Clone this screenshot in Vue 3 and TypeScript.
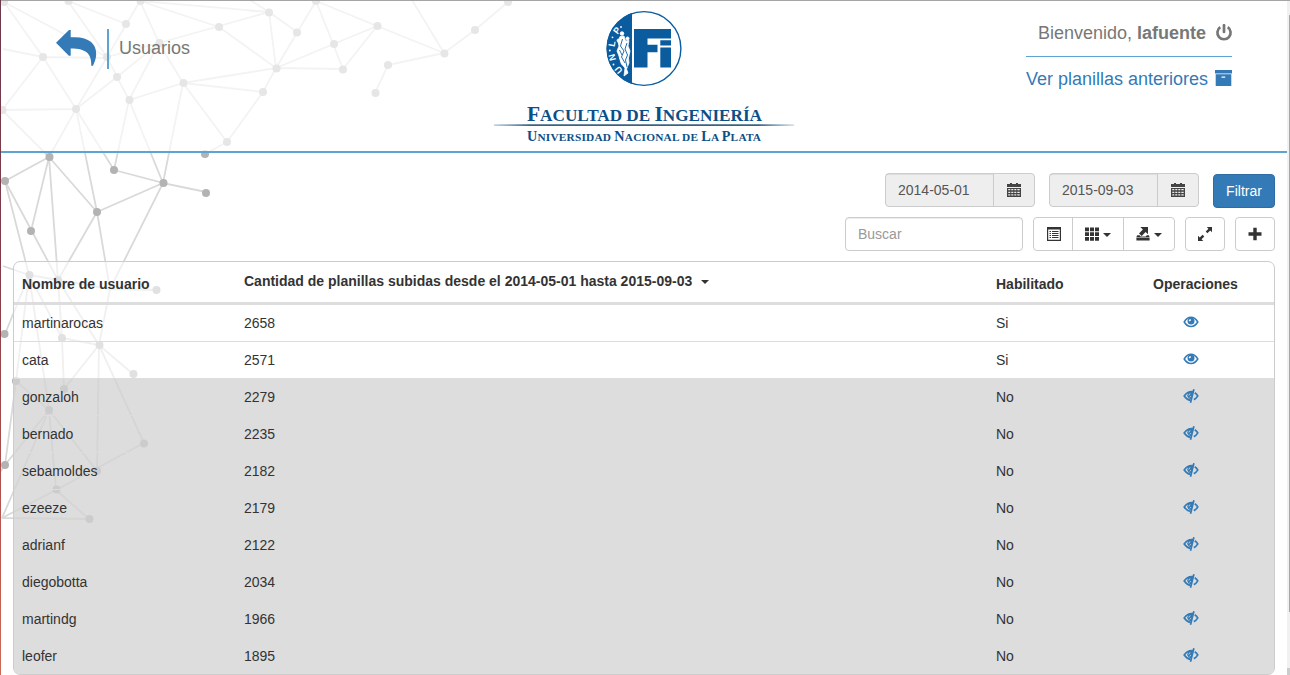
<script setup lang="ts">
interface UserRow {
  name: string
  count: number
  enabled: boolean
}

const from = '2014-05-01'
const to = '2015-09-03'

const users: UserRow[] = [
  { name: 'martinarocas', count: 2658, enabled: true },
  { name: 'cata', count: 2571, enabled: true },
  { name: 'gonzaloh', count: 2279, enabled: false },
  { name: 'bernado', count: 2235, enabled: false },
  { name: 'sebamoldes', count: 2182, enabled: false },
  { name: 'ezeeze', count: 2179, enabled: false },
  { name: 'adrianf', count: 2122, enabled: false },
  { name: 'diegobotta', count: 2034, enabled: false },
  { name: 'martindg', count: 1966, enabled: false },
  { name: 'leofer', count: 1895, enabled: false },
]

// Vertices of the decorative mesh behind the page
const nodes: [number, number][] = [
  [4, 2], [68.500, 1], [140.500, 1], [126, 24], [219, 27], [159.500, 43], [43, 57], [107, 57], [117, 77],
  [129.5, 100], [183.500, 83], [76, 109], [2.500, 110], [227, 142], [269, 12.500], [297, 32.500], [316, 1],
  [377.500, 26], [334, 44], [276.500, 68.500], [343, 69.500], [263, 92], [444.500, 53.500], [475, 30], [508, 2],
  [388, 65], [375.500, 93], [49.500, 157], [5, 181], [31, 231], [114, 170], [163.500, 183], [97, 212],
  [205, 154], [206, 193], [29.500, 275], [58, 280], [156.500, 290], [4.500, 334], [62, 338], [99.500, 345],
  [133.500, 374], [16, 381], [64, 389], [49, 410], [144, 443.500], [5, 465], [97, 471], [56.500, 489.500],
  [89.500, 519],
]

const mesh = [
  'M43 57L4 2L107 57L68 1L126 24M107 57L140 1L159 43M269 12L140 1L219 27M159 43L269 12M219 27L276 68',
  'M3 49L43 57L107 58M76 109L43 57L2 110L76 109L107 57L117 77L129 100M107 57L159 43M76 109L117 77L159 43L129 100L183 83L159 43',
  'M276 68L183 83L263 92L227 142L183 83M227 142L205 154M2 110L49 157L76 109L97 212M76 109L114 170L129 100L163 183L183 83',
  'M250 0L269 12L297 32M250 11L269 12M269 12L276 68L316 1L377 26L276 68L343 69L377 26L444 53L412 0M316 1L343 69M444 53L475 30L508 2M444 53L388 65L375 93M276 68L263 92',
  'M5 181L49 157L31 231M97 212L49 157L58 280L5 181L29 275M114 170L163 183L97 212M206 192L163 183L110 289L97 212L58 280',
  'M3 266L29 275L58 280L110 289L156 290M5 334L29 275L16 381M49 410L29 275L62 338M58 280L62 338L64 389M58 280L99 345L110 289M62 338L99 345L133 374',
  'M64 389L99 345L144 443M99 345L97 471M5 465L16 381L49 410L5 465L0 472M2 518L49 410L56 490M49 410L97 471M144 443L56 490L2 518L89 519L56 490',
].join('')
</script>

<template>
  <div class="page">
    <svg class="mesh" viewBox="0 0 520 675" width="520" height="675">
      <path :d="mesh" fill="none" stroke="#d9d9d9" stroke-width="1.8" />
      <circle v-for="([x, y], i) in nodes" :key="i" :cx="x" :cy="y" r="4" fill="#b3b3b3" />
    </svg>

    <header class="header">
      <div class="crumb">
        <svg class="back" viewBox="0 0 42 38" width="42" height="38">
          <path d="M0 13.800L13 1H14.700V8.300H19C33 8.300 40.200 15 40.200 25C40.200 29.500 38.500 33 37 36.800H35.300C35.600 25.500 31 19.600 14.700 19.600V26.700H12.900Z" fill="#337ab7" />
        </svg>
        <h1 class="title">Usuarios</h1>
      </div>

      <svg class="brand" viewBox="490 8 308 138" width="308" height="138">
        <defs>
          <linearGradient id="rule" x1="0" x2="1">
            <stop offset="0" stop-color="#0b4f88" stop-opacity=".3" />
            <stop offset=".12" stop-color="#0c3c60" />
            <stop offset=".88" stop-color="#0c3c60" />
            <stop offset="1" stop-color="#0b4f88" stop-opacity=".2" />
          </linearGradient>
          <clipPath id="half"><rect x="600" y="8" width="32" height="82" /></clipPath>
        </defs>
        <circle cx="644" cy="48.500" r="36.900" fill="#fff" stroke="#0a5c9f" stroke-width="1.400" />
        <circle cx="644" cy="48.500" r="37.400" fill="#0a5c9f" clip-path="url(#half)" />
        <path d="M634 29H671V38.500H647.500V44.800H657.500V52.300H647.500V67.500H634ZM660.300 40.300H671V45.600H660.300ZM660.300 47.500H671V67.500H660.300Z" fill="#0a5c9f" />
        <g fill="#fff" stroke="#fff" stroke-width=".8" stroke-linejoin="round">
          <circle cx="622" cy="33.500" r="1.800" />
          <circle cx="627.500" cy="38.500" r="1.600" />
          <circle cx="618.500" cy="40.500" r="1.500" />
          <path d="M620 36.500L624 36L625.500 41L629 40.500L628 46L630 51L628.500 58L629 63L626.500 69L628 73L624 76L625 68L620.500 63L619 56L617 51L619 46L618 42Z" />
        </g>
        <path d="M622.500 39L620.500 46L624 51L621.500 57L625 63M627 43L625 49L627.500 55L625.500 60L627 67M619.500 50L622 55M618 57L621 66" fill="none" stroke="#0a5c9f" stroke-width=".9" />
        <g class="arc">
          <text transform="translate(618.500 70) rotate(-130)" y="3.200">U</text>
          <circle cx="613.500" cy="64.500" r=".9" />
          <text transform="translate(612 57.500) rotate(-105)" y="3.200">N</text>
          <circle cx="609.800" cy="50.500" r=".9" />
          <text transform="translate(611.800 43.800) rotate(-80)" y="3.200">L</text>
          <circle cx="612.500" cy="37.300" r=".9" />
          <text transform="translate(616.800 30.500) rotate(-52)" y="3.200">P</text>
          <circle cx="621" cy="27" r=".9" />
        </g>
        <g class="wordmark">
          <text x="527" y="120.600" textLength="235" lengthAdjust="spacing" font-size="17.200"><tspan font-size="21.500">F</tspan>ACULTAD DE <tspan font-size="21.500">I</tspan>NGENIERÍA</text>
          <text x="527" y="140.800" textLength="234" lengthAdjust="spacing" font-size="11.300"><tspan font-size="14.200">U</tspan>NIVERSIDAD <tspan font-size="14.200">N</tspan>ACIONAL DE <tspan font-size="14.200">L</tspan>A <tspan font-size="14.200">P</tspan>LATA</text>
        </g>
        <rect x="494" y="124.400" width="300" height="1.400" fill="url(#rule)" />
      </svg>

      <div class="account">
        <div class="welcome">
          <span>Bienvenido, <b>lafuente</b></span>
          <svg viewBox="0 0 18 18" width="18" height="18" fill="none" stroke="#777" stroke-width="2.700">
            <path d="M5.300 3.200A6.600 6.600 0 1 0 12.700 3.200" />
            <path d="M9 1.200V8" stroke-linecap="round" />
          </svg>
        </div>
        <a class="archive">
          <span>Ver planillas anteriores</span>
          <svg viewBox="0 0 17 16" width="17" height="16" fill="#337ab7">
            <path d="M0 0H17V3.500H0Z" />
            <path fill-rule="evenodd" d="M.7 4.200H16.300V16H.7ZM6.500 6.500V7.800H10.200V6.500Z" />
          </svg>
        </a>
      </div>
    </header>

    <main class="content">
      <div class="filters">
        <div v-for="date in [from, to]" :key="date" class="date">
          <span class="date-value">{{ date }}</span>
          <span class="date-addon">
            <svg viewBox="0 0 14 14" width="14" height="14" fill="#444">
              <path d="M0 1H3V0H5V1H9V0H11V1H14V4H0Z" />
              <path fill-rule="evenodd" d="M0 5H14V14H0ZM1.300 6V7.300H3.300V6ZM4.300 6V7.300H6.300V6ZM7.300 6V7.300H9.300V6ZM10.300 6V7.300H12.700V6ZM1.300 8.700V10H3.300V8.700ZM4.300 8.700V10H6.300V8.700ZM7.300 8.700V10H9.300V8.700ZM10.300 8.700V10H12.700V8.700ZM1.300 11.300V12.600H3.300V11.300ZM4.300 11.300V12.600H6.300V11.300ZM7.300 11.300V12.600H9.300V11.300ZM10.300 11.300V12.600H12.700V11.300Z" />
            </svg>
          </span>
        </div>
        <button class="primary">Filtrar</button>
      </div>

      <div class="tools">
        <input class="search" type="text" placeholder="Buscar" />
        <div class="group">
          <button class="tool list">
            <svg viewBox="0 0 14 14" width="14" height="14">
              <path fill="#333" fill-rule="evenodd" d="M0 0H14V14H0ZM1.200 2.500V12.800H12.800V2.500Z" />
              <path stroke="#333" d="M2.500 4.500H4M5 4.500H11.500M2.500 6.500H4M5 6.500H11.500M2.500 8.500H4M5 8.500H11.500M2.500 10.500H4M5 10.500H11.500" />
            </svg>
          </button>
          <button class="tool columns">
            <svg viewBox="0 0 14 14" width="14" height="14" fill="#333">
              <path d="M0 .5H4V4.300H0ZM5 .5H9V4.300H5ZM10 .5H14V4.300H10ZM0 5.300H4V9.100H0ZM5 5.300H9V9.100H5ZM10 5.300H14V9.100H10ZM0 10.100H4V13.800H0ZM5 10.100H9V13.800H5ZM10 10.100H14V13.800H10Z" />
            </svg>
            <i class="caret" />
          </button>
          <button class="tool export">
            <svg viewBox="0 0 14 14" width="14" height="14" fill="#333">
              <path d="M4.300 0H12V7.300L9.600 5L5.700 8.900L3 6.500L6.900 2.600Z" />
              <path d="M1.200 8.300H3.600L4.700 9.600H9.700L10.800 8.300H12.800L13.600 10H.4ZM.4 10.500H13.600V13.500H.4Z" />
            </svg>
            <i class="caret" />
          </button>
        </div>
        <button class="tool single">
          <svg class="nudge" viewBox="0 0 14 14" width="14" height="14" fill="#333">
            <path d="M8.700 0H14V5.300L12.200 3.500L9.400 6.300L7.700 4.600L10.500 1.800ZM0 14V8.700L1.800 10.500L4.600 7.700L6.300 9.400L3.500 12.200L5.300 14Z" />
          </svg>
        </button>
        <button class="tool single">
          <svg class="nudge" viewBox="0 0 14 14" width="14" height="14"><path d="M5.300 .8H8.700V5.300H13.500V8.700H8.700V13.200H5.300V8.700H.5V5.300H5.300Z" fill="#333" /></svg>
        </button>
      </div>

      <div class="table">
        <div class="row head">
          <div>Nombre de usuario</div>
          <div class="sorted">Cantidad de planillas subidas desde el {{ from }} hasta {{ to }}<i class="caret" /></div>
          <div>Habilitado</div>
          <div class="ops">Operaciones</div>
        </div>
        <div v-for="user in users" :key="user.name" class="row" :class="{ disabled: !user.enabled }">
          <div>{{ user.name }}</div>
          <div>{{ user.count }}</div>
          <div>{{ user.enabled ? 'Si' : 'No' }}</div>
          <div class="ops">
            <svg v-if="user.enabled" viewBox="0 0 16 14" width="16" height="14">
              <path d="M1.200 7Q4 2.300 8 2.300T14.800 7Q12 11.500 8 11.500T1.200 7Z" fill="none" stroke="#337ab7" stroke-width="1.500" />
              <circle cx="8" cy="6" r="3.500" fill="#337ab7" />
              <path d="M5.700 5.900Q6 4.300 7.700 4L7.800 5.600Q7.200 6.600 5.700 5.900Z" fill="#fff" />
            </svg>
            <svg v-else viewBox="0 0 16 14" width="16" height="14">
              <path d="M10.200 2.700Q4.500 2 1.200 7Q3.800 10.800 7.400 11.300" fill="none" stroke="#337ab7" stroke-width="1.700" />
              <path d="M10 2.700L8 10.300Q4.300 9.400 4.300 6.300Q4.400 3.600 7.200 2.700Z" fill="#337ab7" />
              <path d="M5.800 6.500Q6 5 7.300 4.800M6.600 8.300L7.900 7.300" stroke="#ddd" fill="none" stroke-width=".9" />
              <path d="M10.900 .2L7.500 13.800M11.700 3.700Q13.600 4.900 14.800 6.900Q13.300 9.500 10.800 10.600" fill="none" stroke="#337ab7" stroke-width="1.700" />
            </svg>
          </div>
        </div>
      </div>
    </main>

    <div class="edge-top" />
    <div class="edge-left" />
    <div class="scrollbar"><div class="thumb" /></div>
  </div>
</template>

<style>
body {
  margin: 0;
  overflow: hidden;
}
</style>

<style scoped>
* {
  box-sizing: border-box;
}
.page {
  position: relative;
  width: 1290px;
  height: 675px;
  overflow: hidden;
  background: #fff;
  color: #333;
  font: 14px/20px "Liberation Sans", Arial, sans-serif;
}
svg {
  display: block;
  flex: none;
}
.mesh {
  position: absolute;
  left: 0;
  top: 0;
}
.header {
  position: relative;
  display: flex;
  align-items: flex-start;
  width: 1287px;
  height: 153px;
  border-bottom: 2px solid #5fa3d0;
  background: rgba(255, 255, 255, 0.67);
  background-clip: padding-box;
}
.crumb {
  display: flex;
  width: 490px;
  padding: 29px 0 0 56px;
}
.title {
  height: 40px;
  margin: 0 0 0 9px;
  padding-left: 10px;
  border-left: 2px solid #5fa3d0;
  color: #777;
  font-size: 18px;
  font-weight: 400;
  line-height: 38px;
}
.brand {
  margin-top: 8px;
}
.wordmark {
  fill: #0b4f88;
  font-family: "Liberation Serif", serif;
  font-weight: 700;
}
.arc {
  fill: #fff;
  font: 700 9px "Liberation Sans", sans-serif;
  text-anchor: middle;
}
.account {
  width: 206px;
  margin: 22px 0 0 228px;
  font-size: 18px;
}
.welcome {
  display: flex;
  justify-content: flex-end;
  height: 35px;
  border-bottom: 1px solid #5fa3d0;
  color: #777;
  line-height: 22px;
}
.welcome svg {
  margin: 2px -1px 0 9px;
}
.archive {
  display: flex;
  justify-content: space-between;
  padding-top: 11px;
  color: #337ab7;
  line-height: 22px;
  white-space: nowrap;
}
.archive svg {
  margin-top: 2px;
}
.content {
  position: relative;
  padding: 20px 15px 0 13px;
}
.filters {
  display: flex;
  justify-content: flex-end;
  gap: 14px;
  height: 35px;
}
.date {
  display: flex;
  width: 150px;
  height: 34px;
  border: 1px solid #ccc;
  border-radius: 4px;
  background: #eee;
  color: #555;
  line-height: 32px;
}
.date-value {
  flex: 1;
  padding-left: 12px;
  box-shadow: inset 0 1px 1px rgba(0, 0, 0, 0.075);
}
.date-addon {
  display: flex;
  align-items: center;
  justify-content: center;
  width: 41px;
  border-left: 1px solid #ccc;
}
button {
  margin: 0;
  padding: 0;
  font: inherit;
}
.primary {
  width: 62px;
  height: 34px;
  margin-top: 1px;
  border: 1px solid #2e6da4;
  border-radius: 4px;
  background: #337ab7;
  color: #fff;
}
.tools {
  display: flex;
  justify-content: flex-end;
  gap: 10px;
  height: 34px;
  margin-top: 9px;
}
.search {
  width: 178px;
  height: 34px;
  padding: 6px 12px;
  border: 1px solid #ccc;
  border-radius: 4px;
  background: #fff;
  box-shadow: inset 0 1px 1px rgba(0, 0, 0, 0.075);
  font: inherit;
}
.search::placeholder {
  color: #999;
  opacity: 1;
}
.group {
  display: flex;
}
.tool {
  display: flex;
  align-items: center;
  justify-content: center;
  height: 34px;
  border: 1px solid #ccc;
  background: #fff;
}
.tool svg {
  margin-bottom: 1px;
}
.single {
  width: 40px;
  border-radius: 4px;
}
.tool .nudge {
  margin-right: 1px;
}
.list {
  width: 40px;
  padding-left: 1px;
  border-radius: 4px 0 0 4px;
}
.columns,
.export {
  width: 52px;
  margin-left: -1px;
}
.export {
  border-radius: 0 4px 4px 0;
}
.caret {
  width: 0;
  margin: 2px 0 0 4px;
  border: 4px solid transparent;
  border-top-color: #333;
  border-bottom: 0;
}
.table {
  margin-top: 10px;
  border: 1px solid #ccc;
  border-radius: 7px;
  background: rgba(255, 255, 255, 0.6);
  overflow: hidden;
}
.row {
  display: grid;
  grid-template-columns: 222px 752px 125px 1fr;
  height: 37px;
  padding-left: 8px;
  border-top: 1px solid #ddd;
  line-height: 37px;
}
.row.head {
  height: 42px;
  border-top: 0;
  border-bottom: 2px solid #ddd;
  font-weight: 700;
  line-height: 44px;
}
.row.disabled {
  background: rgba(179, 179, 179, 0.45);
}
.sorted {
  display: flex;
  align-items: center;
  height: 38px;
  line-height: 38px;
}
.sorted .caret {
  margin-left: 9px;
}
.ops {
  display: flex;
  justify-content: center;
  padding-right: 4px;
}
.row:not(.head) .ops {
  padding: 10px 14px 0 0;
}
.edge-top {
  position: absolute;
  left: 0;
  right: 0;
  top: 0;
  height: 1px;
  background: #a5a5a5;
}
.edge-left {
  position: absolute;
  left: 0;
  top: 0;
  bottom: 0;
  width: 1px;
  background: linear-gradient(#6b3a4c, #823c49 40%, #b8554f 78%, #cb6a58);
}
.scrollbar {
  position: absolute;
  right: 0;
  top: 1px;
  bottom: 0;
  width: 3px;
  padding: 14px 0 0 2px;
  border-bottom: 7px solid #ccc;
  background: #f1f1f1;
}
.thumb {
  height: 597px;
  background: #a8a8a8;
}
</style>
